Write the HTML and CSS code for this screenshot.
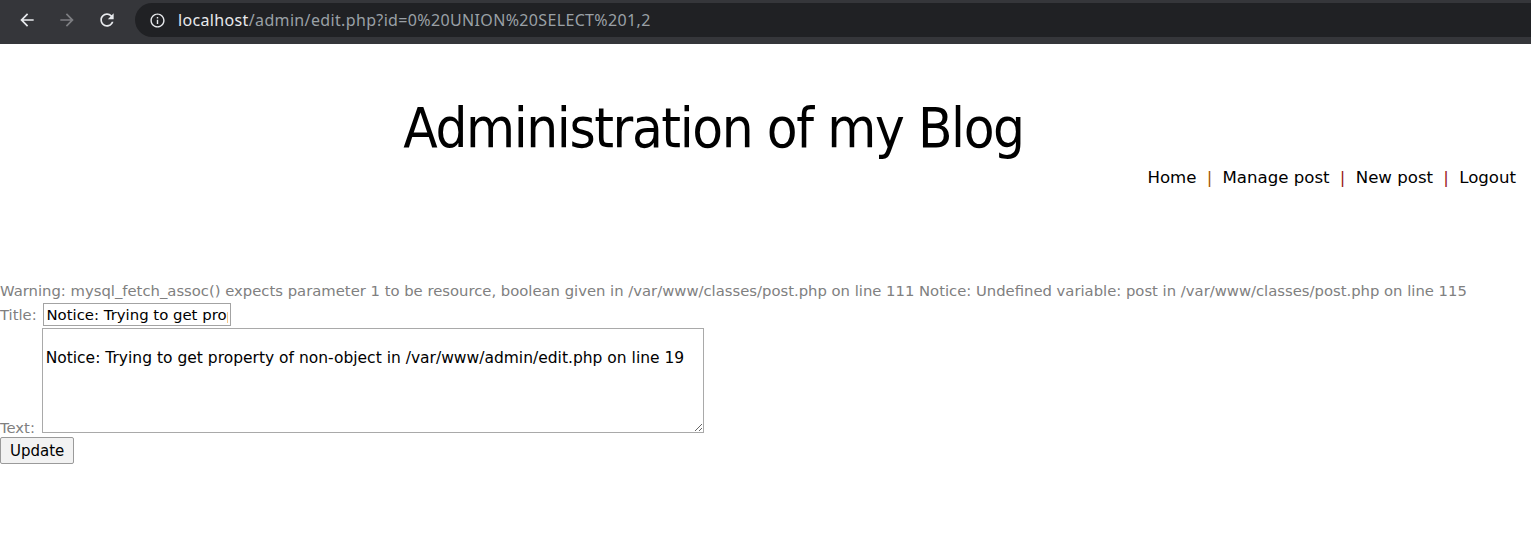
FILE: index.html
```html
<!DOCTYPE html>
<html lang="en">
<head>
<meta charset="utf-8">
<title>Administration of my Blog</title>
<link rel="stylesheet" href="styles.css">
</head>
<body>
<div class="chrome">
  <div class="navbtns">
    <span class="cbtn"><svg viewBox="0 0 24 24" width="20" height="20"><path fill="#e8eaed" d="M20 11H7.83l5.59-5.59L12 4l-8 8 8 8 1.41-1.41L7.83 13H20v-2z"/></svg></span>
    <span class="cbtn"><svg viewBox="0 0 24 24" width="20" height="20"><path fill="#7d7e82" d="M4 11h12.17l-5.59-5.59L12 4l8 8-8 8-1.41-1.41L16.17 13H4v-2z"/></svg></span>
    <span class="cbtn"><svg viewBox="0 0 24 24" width="20" height="20"><path fill="#e8eaed" d="M17.65 6.35C16.2 4.9 14.21 4 12 4c-4.42 0-7.99 3.58-7.99 8s3.57 8 7.99 8c3.730 0 6.84-2.55 7.73-6h-2.08c-.82 2.33-3.04 4-5.65 4-3.31 0-6-2.69-6-6s2.69-6 6-6c1.66 0 3.14.69 4.22 1.78L13 11h7V4l-2.35 2.35z"/></svg></span>
  </div>
  <div class="omnibox">
    <svg class="info" viewBox="0 0 24 24" width="17" height="17"><path fill="#e8eaed" d="M11 7h2v2h-2zm0 4h2v6h-2zm1-9C6.48 2 2 6.48 2 12s4.48 10 10 10 10-4.48 10-10S17.52 2 12 2zm0 18c-4.41 0-8-3.59-8-8s3.59-8 8-8 8 3.59 8 8-3.59 8-8 8z"/></svg>
    <span class="url"><span class="host">localhost</span>/admin/edit.php?id=0%20UNION%20SELECT%201,2</span>
  </div>
</div>
<div class="page">
  <header class="header">
    <h1 class="title">Administration of my Blog</h1>
    <nav class="menu">Home <span class="pipe pipe1">|</span> Manage post <span class="pipe">|</span> New post <span class="pipe">|</span> Logout</nav>
  </header>
  <div class="content">
    <div class="warning">Warning: mysql_fetch_assoc() expects parameter 1 to be resource, boolean given in /var/www/classes/post.php on line 111 Notice: Undefined variable: post in /var/www/classes/post.php on line 115</div>
    <form class="form">
      <div class="row row-title">Title: <input class="field-title" type="text" value="Notice: Trying to get property of non-object in /var/www/admin/edit.php on line 18"></div>
      <div class="row row-text">Text: <textarea class="field-text">

Notice: Trying to get property of non-object in /var/www/admin/edit.php on line 19</textarea></div>
      <button class="update" type="button">Update</button>
    </form>
  </div>
</div>
</body>
</html>
```
FILE: styles.css
```css
html, body {
  margin: 0;
  padding: 0;
  background: #ffffff;
}
body {
  font-family: "DejaVu Sans", sans-serif;
}
.chrome {
  height: 44px;
  background: #35363a;
  display: flex;
  align-items: flex-start;
  padding-top: 3px;
  box-sizing: border-box;
}
.navbtns {
  display: flex;
  padding-left: 7px;
  height: 34px;
  align-items: center;
}
.cbtn {
  width: 40px;
  height: 34px;
  display: flex;
  align-items: center;
  justify-content: center;
}
.omnibox {
  margin-left: 8px;
  flex: 1;
  height: 34px;
  background: #202124;
  border-radius: 17px 0 0 17px;
  display: flex;
  align-items: center;
  padding-left: 14px;
}
.info {
  display: block;
}
.url {
  margin-left: 12px;
  font-family: "Noto Sans", "Open Sans", sans-serif;
  font-size: 16px;
  color: #9aa0a6;
  letter-spacing: 0.35px;
}
.host {
  color: #e8eaed;
}
.header {
  display: flex;
  flex-direction: column;
}
.title {
  margin: 0;
  padding-top: 51px;
  padding-right: 104px;
  text-align: center;
  font-weight: normal;
  font-stretch: condensed;
  font-size: 56px;
  line-height: 66px;
  letter-spacing: -1.4px;
  color: #000;
}
.menu {
  margin-top: 6px;
  text-align: right;
  padding-right: 15px;
  font-size: 16.6px;
  line-height: 21px;
  color: #000;
}
.pipe {
  margin: 0 5px;
  color: #9b1a1a;
}
.pipe1 {
  color: #a65a00;
}
.content {
  margin-top: 94px;
  font-size: 14.8px;
  color: #808080;
}
.warning {
  line-height: 18px;
  margin-bottom: 3px;
}
.row {
  line-height: 18px;
}
.row-text {
  margin-top: 2px;
}
.field-title {
  width: 188px;
  height: 23px;
  box-sizing: border-box;
  border: 1px solid #a3a3a3;
  padding: 1px 2px;
  margin: 0 0 0 2px;
  font-family: inherit;
  font-size: 14.9px;
  color: #000;
  vertical-align: baseline;
}
.field-text {
  width: 662px;
  height: 105px;
  box-sizing: border-box;
  border: 1px solid #a9a9a9;
  padding: 2px 3px;
  margin: 0 0 0 2px;
  font-family: inherit;
  font-size: 15.5px;
  color: #000;
}
.update {
  margin-top: 0;
  height: 27px;
  padding: 0 9px;
  font-family: inherit;
  font-size: 15px;
  color: #000;
  background: #f2f2f2;
  border: 1px solid #9a9a9a;
  border-radius: 2px;
}
```
